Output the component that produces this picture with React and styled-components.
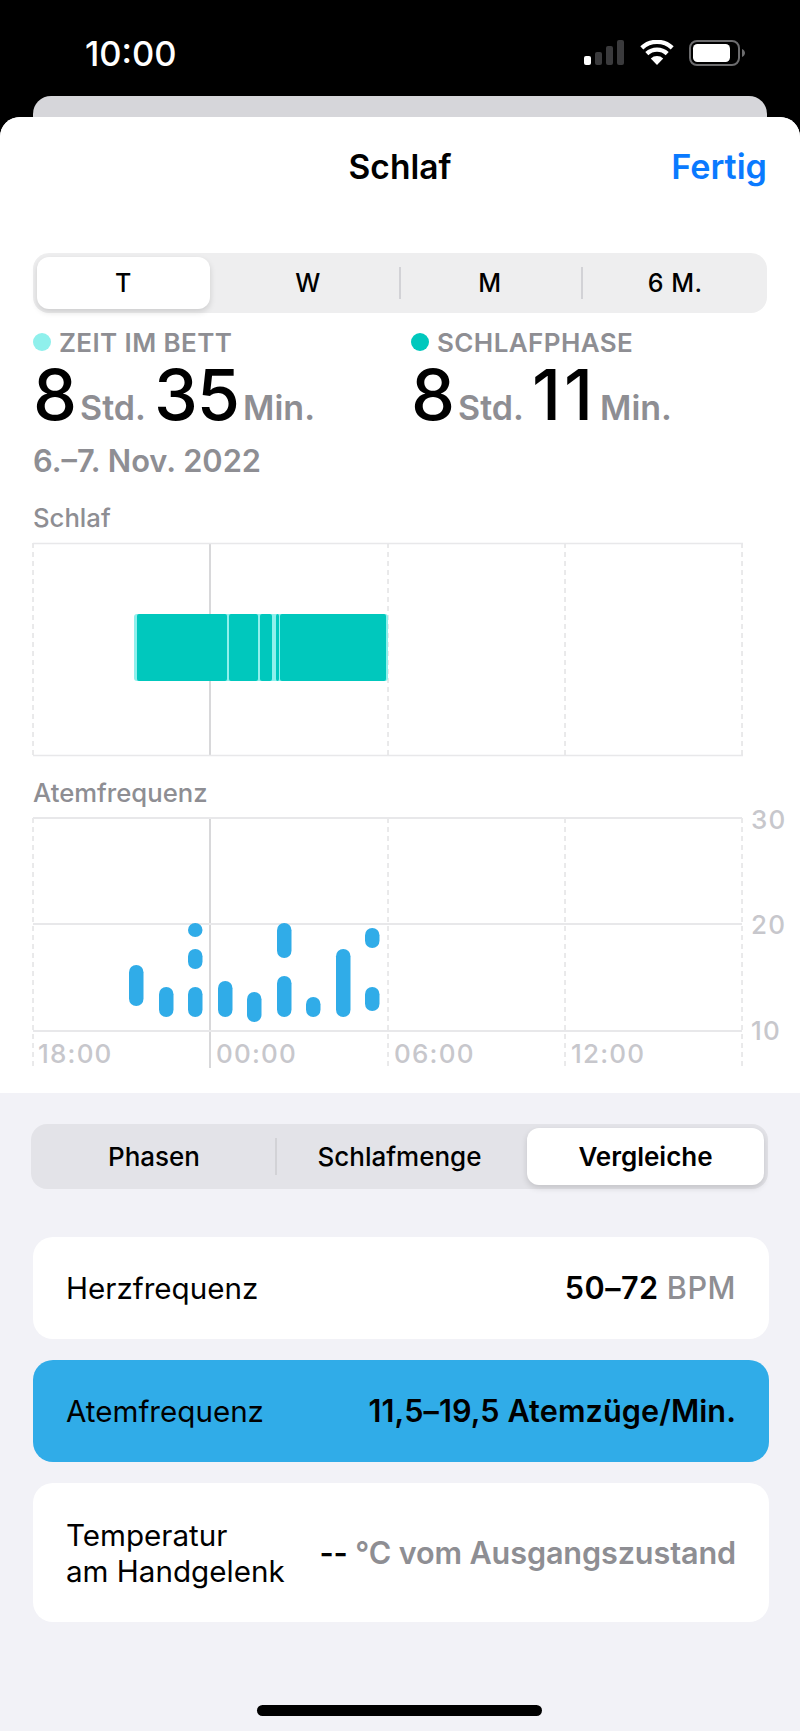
import React from 'react';
import styled, { createGlobalStyle } from 'styled-components';

const GlobalStyle = createGlobalStyle`
  html, body {
    margin: 0;
    padding: 0;
    background: #000;
  }
  * {
    box-sizing: border-box;
  }
`;

const Page = styled.div`
  width: 800px;
  height: 1731px;
  background: #000;
  font-family: Inter, 'Liberation Sans', sans-serif;
  overflow: hidden;
  display: flex;
  flex-direction: column;
`;

const StatusBar = styled.div`
  height: 96px;
  flex: none;
  display: flex;
  align-items: flex-start;
  justify-content: space-between;
  padding: 35px 54px 0 85px;
`;

const Clock = styled.div`
  color: #fff;
  font-size: 34.5px;
  line-height: 38px;
  font-weight: 500;
`;

const StatusIcons = styled.div`
  display: flex;
  align-items: flex-start;
  gap: 15px;
  padding-top: 5px;
`;

const BackCard = styled.div`
  height: 21px;
  flex: none;
  margin: 0 33px;
  background: #d6d6da;
  border-radius: 18px 18px 0 0;
`;

const Sheet = styled.div`
  flex: 1;
  display: flex;
  flex-direction: column;
  background: #f2f2f7;
  border-radius: 20px 20px 0 0;
  overflow: hidden;
`;

const TopPane = styled.div`
  height: 976px;
  flex: none;
  background: #fff;
  padding: 0 33px;
`;

const NavBar = styled.div`
  height: 136px;
  padding-top: 30px;
  display: grid;
  grid-template-columns: 1fr auto 1fr;
  align-items: start;
  line-height: 40px;
  font-weight: 600;
`;

const NavTitle = styled.div`
  grid-column: 2;
  color: #000;
  font-size: 33.5px;
`;

const NavAction = styled.div`
  grid-column: 3;
  justify-self: end;
  color: #0a7aff;
  font-size: 34.2px;
`;

const Segments = styled.div`
  display: grid;
  grid-template-columns: ${(props) => props.$columns};
  background: ${(props) => props.$bg};
  border-radius: 16px;
  height: ${(props) => props.$height}px;
  padding: 4px;
`;

const Segment = styled.div`
  display: flex;
  align-items: center;
  justify-content: center;
  position: relative;
  color: #000;
  font-size: ${(props) => props.$size}px;
  font-weight: ${(props) => (props.$bold ? 600 : 500)};
  letter-spacing: ${(props) => props.$spacing || 0}px;
  border-radius: 12px;
  margin-right: ${(props) => props.$inset || 0}px;
  padding: 0 ${(props) => props.$right || 0}px 0 ${(props) => props.$left || 0}px;
  background: ${(props) => (props.$active ? '#fff' : 'transparent')};
  box-shadow: ${(props) => (props.$active ? '0 3px 6px rgba(0, 0, 0, 0.14)' : 'none')};
`;

const SegmentSep = styled.span`
  position: absolute;
  left: -1px;
  top: 10px;
  bottom: 10px;
  width: 2px;
  background: #d2d2d6;
`;

const Summary = styled.div`
  display: grid;
  grid-template-columns: 378px 1fr;
  padding-top: 18px;
`;

const Stat = styled.div`
  display: flex;
  flex-direction: column;
`;

const StatLabel = styled.div`
  display: flex;
  align-items: center;
  gap: 8px;
  height: 22px;
  color: #8e8e93;
  font-size: 26px;
  letter-spacing: 0.4px;
  font-weight: 600;
`;

const Dot = styled.span`
  width: 18px;
  height: 18px;
  border-radius: 50%;
  background: ${(props) => props.$color};
`;

const StatValue = styled.div`
  display: flex;
  align-items: baseline;
  height: 74px;
  margin-top: 2px;
  line-height: 80px;
`;

const Big = styled.span`
  color: #000;
  font-size: 70px;
  font-weight: 500;
  letter-spacing: ${(props) => props.$spacing ?? -1}px;
`;

const Unit = styled.span`
  color: #8e8e93;
  font-size: 34px;
  font-weight: 600;
  margin: 0 8px 0 4px;
`;

const DateLine = styled.div`
  color: #8e8e93;
  font-size: 30.8px;
  line-height: 38px;
  font-weight: 600;
  margin-top: 13px;
`;

const ChartLabel = styled.div`
  color: #8e8e93;
  font-size: 25.7px;
  line-height: 18px;
  font-weight: 500;
  margin-top: ${(props) => props.$top}px;
`;

const ChartSvg = styled.svg`
  display: block;
  margin-left: -33px;
`;

const AxisText = styled.text`
  fill: #c7c7cc;
  font-family: Inter, 'Liberation Sans', sans-serif;
  font-size: 26px;
  font-weight: 500;
  letter-spacing: 1.2px;
`;

const BottomPane = styled.div`
  padding: 31px 32px 0 31px;
  display: flex;
  flex-direction: column;
`;

const Rows = styled.div`
  display: flex;
  flex-direction: column;
  gap: 21px;
  margin: 48px -1px 0 2px;
`;

const Row = styled.div`
  display: flex;
  align-items: center;
  justify-content: space-between;
  min-height: ${(props) => props.$height}px;
  padding: 0 33px;
  border-radius: 20px;
  background: ${(props) => (props.$active ? '#30ace8' : '#fff')};
  color: #000;
  line-height: 36px;
`;

const RowTitle = styled.div`
  font-size: 29.6px;
  font-weight: 400;
`;

const RowValue = styled.div`
  font-size: 30.6px;
  font-weight: 600;
  letter-spacing: ${(props) => props.$spacing || 0}px;
  white-space: nowrap;
`;

const Muted = styled.span`
  color: #8e8e93;
  font-weight: ${(props) => props.$weight || 500};
`;

const HomeIndicator = styled.div`
  width: 285px;
  height: 11px;
  margin: 83px auto 0;
  border-radius: 6px;
  background: #000;
`;

const LIGHT = '#8ff0ec';
const TEAL = '#00c8bd';
const BLUE = '#30ace8';
const GRID = '#e8e8ea';
const COLUMNS = [33, 210, 388, 565, 742];

const SLEEP_PARTS = [
  [137, 227],
  [229, 258],
  [260, 272],
  [276, 279],
  [280, 386],
];

const BREATH_BARS = [
  [129, 965, 1006],
  [159, 987, 1017],
  [188, 923, 937],
  [188, 949, 969],
  [188, 987, 1017],
  [218, 981, 1017],
  [247, 992, 1022],
  [277, 923, 958],
  [277, 976, 1017],
  [306, 997, 1017],
  [336, 949, 1017],
  [365, 928, 948],
  [365, 987, 1011],
];

const SleepChart = () => (
  <ChartSvg width="800" height="230" viewBox="0 527 800 230">
    {COLUMNS.map((x, i) => (
      <line
        key={x}
        x1={x}
        x2={x}
        y1="543"
        y2="756"
        stroke={i === 1 ? '#d8d8da' : '#d4d4d6'}
        strokeWidth={i === 1 ? 2 : 1}
        strokeDasharray={i === 1 ? undefined : '5 4'}
      />
    ))}
    <line x1="33" x2="743" y1="543.5" y2="543.5" stroke={GRID} strokeWidth="1.5" />
    <line x1="33" x2="743" y1="755.5" y2="755.5" stroke={GRID} strokeWidth="1.5" />
    <rect x="134" y="614" width="254" height="67" rx="3" fill={LIGHT} />
    {SLEEP_PARTS.map(([from, to]) => (
      <rect key={from} x={from} y="614" width={to - from} height="67" rx="2" fill={TEAL} />
    ))}
  </ChartSvg>
);

const BreathChart = () => (
  <ChartSvg width="800" height="268" viewBox="0 802 800 268">
    {COLUMNS.map((x, i) => (
      <line
        key={x}
        x1={x}
        x2={x}
        y1="818"
        y2="1068"
        stroke={i === 1 ? '#d8d8da' : '#d4d4d6'}
        strokeWidth={i === 1 ? 2 : 1}
        strokeDasharray={i === 1 ? undefined : '5 4'}
      />
    ))}
    {[818, 924, 1031].map((y) => (
      <line key={y} x1="33" x2="742" y1={y} y2={y} stroke={GRID} strokeWidth="2" />
    ))}
    {BREATH_BARS.map(([x, top, bottom]) => (
      <rect key={`${x}-${top}`} x={x} y={top} width="14.5" height={bottom - top} rx="7.25" fill={BLUE} />
    ))}
    <AxisText x="751" y="829">30</AxisText>
    <AxisText x="751" y="934">20</AxisText>
    <AxisText x="751" y="1040">10</AxisText>
    <AxisText x="38" y="1063">18:00</AxisText>
    <AxisText x="216" y="1063">00:00</AxisText>
    <AxisText x="394" y="1063">06:00</AxisText>
    <AxisText x="571" y="1063">12:00</AxisText>
  </ChartSvg>
);

const SignalIcon = () => (
  <svg width="41" height="26" viewBox="0 0 41 26">
    <rect x="0" y="16" width="7" height="9" rx="2" fill="#fff" />
    <rect x="11" y="12" width="7" height="13" rx="2" fill="#3a3a3c" />
    <rect x="22" y="6" width="7" height="19" rx="2" fill="#3a3a3c" />
    <rect x="33" y="0" width="7" height="25" rx="2" fill="#3a3a3c" />
  </svg>
);

const WifiIcon = () => (
  <svg width="34" height="26" viewBox="0 0 34 26">
    <path d="M17 25 L10.8 18.4 A9 9 0 0 1 23.2 18.4 Z" fill="#fff" />
    <path d="M6.8 13.6 A15 15 0 0 1 27.2 13.6" fill="none" stroke="#fff" strokeWidth="4.4" />
    <path d="M1.8 7.8 A22.5 22.5 0 0 1 32.2 7.8" fill="none" stroke="#fff" strokeWidth="4.4" />
  </svg>
);

const BatteryIcon = () => (
  <svg width="57" height="26" viewBox="0 0 57 26">
    <rect x="1" y="1" width="49" height="24" rx="7" fill="none" stroke="#6c6c6e" strokeWidth="2" />
    <rect x="4" y="4" width="37" height="18" rx="4.5" fill="#fff" />
    <path d="M53 9 C55 10 56 11.5 56 13 C56 14.5 55 16 53 17 Z" fill="#6c6c6e" />
  </svg>
);

const App = () => {
  return (
    <Page>
      <GlobalStyle />
      <StatusBar>
        <Clock>10:00</Clock>
        <StatusIcons>
          <SignalIcon />
          <WifiIcon />
          <BatteryIcon />
        </StatusIcons>
      </StatusBar>
      <BackCard />
      <Sheet>
        <TopPane>
          <NavBar>
            <NavTitle>Schlaf</NavTitle>
            <NavAction>Fertig</NavAction>
          </NavBar>
          <Segments $columns="repeat(4, 1fr)" $bg="#eeeeef" $height={60}>
            <Segment $size={25} $active $inset={9}>T</Segment>
            <Segment $size={25} $right={3}>W</Segment>
            <Segment $size={25} $right={2}>
              <SegmentSep />M
            </Segment>
            <Segment $size={25} $left={6} $spacing={0.5}>
              <SegmentSep />6 M.
            </Segment>
          </Segments>
          <Summary>
            <Stat>
              <StatLabel>
                <Dot $color={LIGHT} />
                ZEIT IM BETT
              </StatLabel>
              <StatValue>
                <Big>8</Big>
                <Unit>Std.</Unit>
                <Big>35</Big>
                <Unit>Min.</Unit>
              </StatValue>
            </Stat>
            <Stat>
              <StatLabel>
                <Dot $color={TEAL} />
                SCHLAFPHASE
              </StatLabel>
              <StatValue>
                <Big>8</Big>
                <Unit>Std.</Unit>
                <Big $spacing={3}>11</Big>
                <Unit>Min.</Unit>
              </StatValue>
            </Stat>
          </Summary>
          <DateLine>6.–7. Nov. 2022</DateLine>
          <ChartLabel $top={29}>Schlaf</ChartLabel>
          <SleepChart />
          <ChartLabel $top={27}>Atemfrequenz</ChartLabel>
          <BreathChart />
        </TopPane>
        <BottomPane>
          <Segments $columns="241px 251px 237px" $bg="#e3e3e8" $height={65}>
            <Segment $size={26} $right={3}>Phasen</Segment>
            <Segment $size={26} $right={4}>
              <SegmentSep />Schlafmenge
            </Segment>
            <Segment $size={26} $active $bold>Vergleiche</Segment>
          </Segments>
          <Rows>
            <Row $height={102}>
              <RowTitle>Herzfrequenz</RowTitle>
              <RowValue $spacing={0.5}>
                50–72 <Muted>BPM</Muted>
              </RowValue>
            </Row>
            <Row $height={102} $active>
              <RowTitle>Atemfrequenz</RowTitle>
              <RowValue $spacing={0.1}>11,5–19,5 Atemzüge/Min.</RowValue>
            </Row>
            <Row $height={139}>
              <RowTitle>
                Temperatur
                <br />
                am Handgelenk
              </RowTitle>
              <RowValue $spacing={-0.12}>
                -- <Muted $weight={600}>°C vom Ausgangszustand</Muted>
              </RowValue>
            </Row>
          </Rows>
          <HomeIndicator />
        </BottomPane>
      </Sheet>
    </Page>
  );
};

export default App;
